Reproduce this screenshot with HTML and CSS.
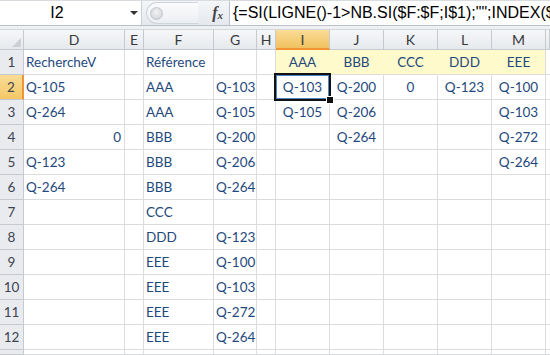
FILE: index.html
```html
<!DOCTYPE html>
<html>
  <head>
    <meta charset="utf-8">
    <title>Feuil1</title>
    <link rel="stylesheet" href="styles.css">
  </head>
  <body>
    <div class="formula-bar">
      <div class="name-box"><span class="ref">I2</span><span class="drop"></span></div>
      <div class="fx-area">
        <div class="pill"><span class="knob"></span></div>
        <span class="fx">f<sub>x</sub></span>
      </div>
      <div class="formula">{=SI(LIGNE()-1&gt;NB.SI($F:$F;I$1);"";INDEX($G</div>
    </div>
    <div class="gap"></div>

    <div class="sheet">
      <div class="row heads">
        <div class="corner"><span class="tri"></span></div>
        <div class="ch">D</div><div class="ch">E</div><div class="ch">F</div><div class="ch">G</div><div class="ch">H</div>
        <div class="ch on">I</div><div class="ch">J</div><div class="ch">K</div><div class="ch">L</div><div class="ch">M</div><div class="ch last"></div>
      </div>

      <div class="row">
        <div class="rh">1</div>
        <div class="c">RechercheV</div><div class="c"></div><div class="c">Référence</div><div class="c"></div><div class="c"></div>
        <div class="c yel mid">AAA</div><div class="c yel mid">BBB</div><div class="c yel mid">CCC</div><div class="c yel mid">DDD</div><div class="c yel mid end">EEE</div><div class="c"></div>
      </div>
      <div class="row">
        <div class="rh on">2</div>
        <div class="c">Q-105</div><div class="c"></div><div class="c">AAA</div><div class="c">Q-103</div><div class="c"></div>
        <div class="c mid sel">Q-103</div><div class="c mid">Q-200</div><div class="c mid">0</div><div class="c mid">Q-123</div><div class="c mid">Q-100</div><div class="c"></div>
      </div>
      <div class="row">
        <div class="rh">3</div>
        <div class="c">Q-264</div><div class="c"></div><div class="c">AAA</div><div class="c">Q-105</div><div class="c"></div>
        <div class="c mid">Q-105</div><div class="c mid">Q-206</div><div class="c mid"></div><div class="c mid"></div><div class="c mid">Q-103</div><div class="c"></div>
      </div>
      <div class="row">
        <div class="rh">4</div>
        <div class="c num">0</div><div class="c"></div><div class="c">BBB</div><div class="c">Q-200</div><div class="c"></div>
        <div class="c mid"></div><div class="c mid">Q-264</div><div class="c mid"></div><div class="c mid"></div><div class="c mid">Q-272</div><div class="c"></div>
      </div>
      <div class="row">
        <div class="rh">5</div>
        <div class="c">Q-123</div><div class="c"></div><div class="c">BBB</div><div class="c">Q-206</div><div class="c"></div>
        <div class="c"></div><div class="c"></div><div class="c"></div><div class="c"></div><div class="c mid">Q-264</div><div class="c"></div>
      </div>
      <div class="row">
        <div class="rh">6</div>
        <div class="c">Q-264</div><div class="c"></div><div class="c">BBB</div><div class="c">Q-264</div><div class="c"></div>
        <div class="c"></div><div class="c"></div><div class="c"></div><div class="c"></div><div class="c"></div><div class="c"></div>
      </div>
      <div class="row">
        <div class="rh">7</div>
        <div class="c"></div><div class="c"></div><div class="c">CCC</div><div class="c"></div><div class="c"></div>
        <div class="c"></div><div class="c"></div><div class="c"></div><div class="c"></div><div class="c"></div><div class="c"></div>
      </div>
      <div class="row">
        <div class="rh">8</div>
        <div class="c"></div><div class="c"></div><div class="c">DDD</div><div class="c">Q-123</div><div class="c"></div>
        <div class="c"></div><div class="c"></div><div class="c"></div><div class="c"></div><div class="c"></div><div class="c"></div>
      </div>
      <div class="row">
        <div class="rh">9</div>
        <div class="c"></div><div class="c"></div><div class="c">EEE</div><div class="c">Q-100</div><div class="c"></div>
        <div class="c"></div><div class="c"></div><div class="c"></div><div class="c"></div><div class="c"></div><div class="c"></div>
      </div>
      <div class="row">
        <div class="rh">10</div>
        <div class="c"></div><div class="c"></div><div class="c">EEE</div><div class="c">Q-103</div><div class="c"></div>
        <div class="c"></div><div class="c"></div><div class="c"></div><div class="c"></div><div class="c"></div><div class="c"></div>
      </div>
      <div class="row">
        <div class="rh">11</div>
        <div class="c"></div><div class="c"></div><div class="c">EEE</div><div class="c">Q-272</div><div class="c"></div>
        <div class="c"></div><div class="c"></div><div class="c"></div><div class="c"></div><div class="c"></div><div class="c"></div>
      </div>
      <div class="row">
        <div class="rh">12</div>
        <div class="c"></div><div class="c"></div><div class="c">EEE</div><div class="c">Q-264</div><div class="c"></div>
        <div class="c"></div><div class="c"></div><div class="c"></div><div class="c"></div><div class="c"></div><div class="c"></div>
      </div>
      <div class="row tail">
        <div class="rh"></div>
        <div class="c"></div><div class="c"></div><div class="c"></div><div class="c"></div><div class="c"></div>
        <div class="c"></div><div class="c"></div><div class="c"></div><div class="c"></div><div class="c"></div><div class="c"></div>
      </div>
    </div>
  </body>
</html>
```

FILE: styles.css
```css
* {
  box-sizing: border-box;
}

html, body {
  margin: 0;
  padding: 0;
  width: 550px;
  height: 355px;
  overflow: hidden;
  background: #ffffff;
}

body {
  font-family: Lato, "Open Sans", sans-serif;
  color: #1f497d;
}

/* formula bar */
.formula-bar {
  display: flex;
  height: 26px;
  border-top: 1px solid #d8dce1;
  border-bottom: 1px solid #b9c0c8;
  font-family: "Liberation Sans", Arial, sans-serif;
  color: #000;
}

.name-box {
  width: 142px;
  display: flex;
  align-items: center;
  background: #fff;
  border-right: 1px solid #c9ced4;
}

.name-box .ref {
  flex: 1;
  text-align: center;
  font-size: 16px;
  padding-right: 16px;
}

.drop {
  width: 0;
  height: 0;
  margin-right: 3px;
  border-left: 4px solid transparent;
  border-right: 4px solid transparent;
  border-top: 4px solid #333;
}

.fx-area {
  width: 88px;
  display: flex;
  align-items: center;
  background: linear-gradient(#f4f6f8, #e5e9ee);
  border-right: 1px solid #b9c0c8;
}

.pill {
  width: 52px;
  height: 22px;
  margin-left: 4px;
  border-radius: 11px 0 0 11px;
  border: 1px solid #cfd4da;
  border-right: none;
  background: linear-gradient(#fbfbfc, #eceff2);
  display: flex;
  align-items: center;
  padding-left: 3px;
}

.knob {
  width: 13px;
  height: 13px;
  border-radius: 50%;
  background: radial-gradient(circle at 50% 40%, #f4f4f4, #c9cdd2);
  border: 1px solid #c3c7cc;
}

.fx {
  margin-left: auto;
  margin-right: 6px;
  font-family: "Liberation Serif", serif;
  font-style: italic;
  font-weight: bold;
  font-size: 16px;
  color: #444;
}

.fx sub {
  font-size: 11px;
  vertical-align: -1px;
}

/* the formula is longer than the bar, Excel just clips it */
.formula {
  flex: 1;
  background: #fff;
  white-space: nowrap;
  overflow: hidden;
  font-size: 16px;
  line-height: 24px;
  padding-left: 3px;
}

.gap {
  height: 3px;
  background: #eef0f2;
}

/* grid */
.row {
  display: grid;
  grid-template-columns: 24px 101px 19px 70px 43px 19px 54px 54px 54px 54px 54px 1fr;
  height: 25px;
}

.row.heads {
  height: 21px;
}

.row.tail {
  height: 5px;
}

.corner, .ch, .rh {
  background: linear-gradient(#f6f7f9, #e6e9ed);
  border-right: 1px solid #c5cad0;
  border-bottom: 1px solid #c5cad0;
  color: #3a3a3a;
  font-size: 14px;
  display: flex;
  align-items: center;
  justify-content: center;
}

.ch {
  border-top: 1px solid #d3d7dc;
}

.corner {
  position: relative;
  border-top: 1px solid #d3d7dc;
}

.tri {
  position: absolute;
  right: 2px;
  bottom: 2px;
  width: 0;
  height: 0;
  border-left: 9px solid transparent;
  border-bottom: 9px solid #cdd0d4;
}

.rh {
  background: #e9ebee;
  font-size: 13.5px;
  color: #3c4450;
}

.ch.on {
  background: linear-gradient(#f9dc96, #f1c15f);
  border-bottom: 2px solid #f29436;
}

.rh.on {
  background: linear-gradient(#f9dc96, #f3c766);
  border-right: 2px solid #f29436;
}

.c {
  border-right: 1px solid #dadcdd;
  border-bottom: 1px solid #dadcdd;
  font-size: 13.5px;
  display: flex;
  align-items: flex-end;
  padding: 0 3px 4px 2px;
  white-space: nowrap;
}

.c.mid {
  justify-content: center;
  padding-left: 0;
  padding-right: 0;
}

.c.num {
  justify-content: flex-end;
}

.c.yel {
  background: #fffacc;
  border-right-color: #fffacc;
}

.c.yel.end {
  border-right-color: #dadcdd;
}

.c.sel {
  position: relative;
}

.c.sel::before {
  content: "";
  position: absolute;
  left: -2px;
  top: -2px;
  right: -2px;
  bottom: -2px;
  border: 2px solid #111;
  box-shadow: inset 0 0 0 1px #4f86c9;
}

.c.sel::after {
  content: "";
  position: absolute;
  right: -5px;
  bottom: -5px;
  width: 6px;
  height: 6px;
  background: #111;
  border: 1px solid #fff;
}
```
